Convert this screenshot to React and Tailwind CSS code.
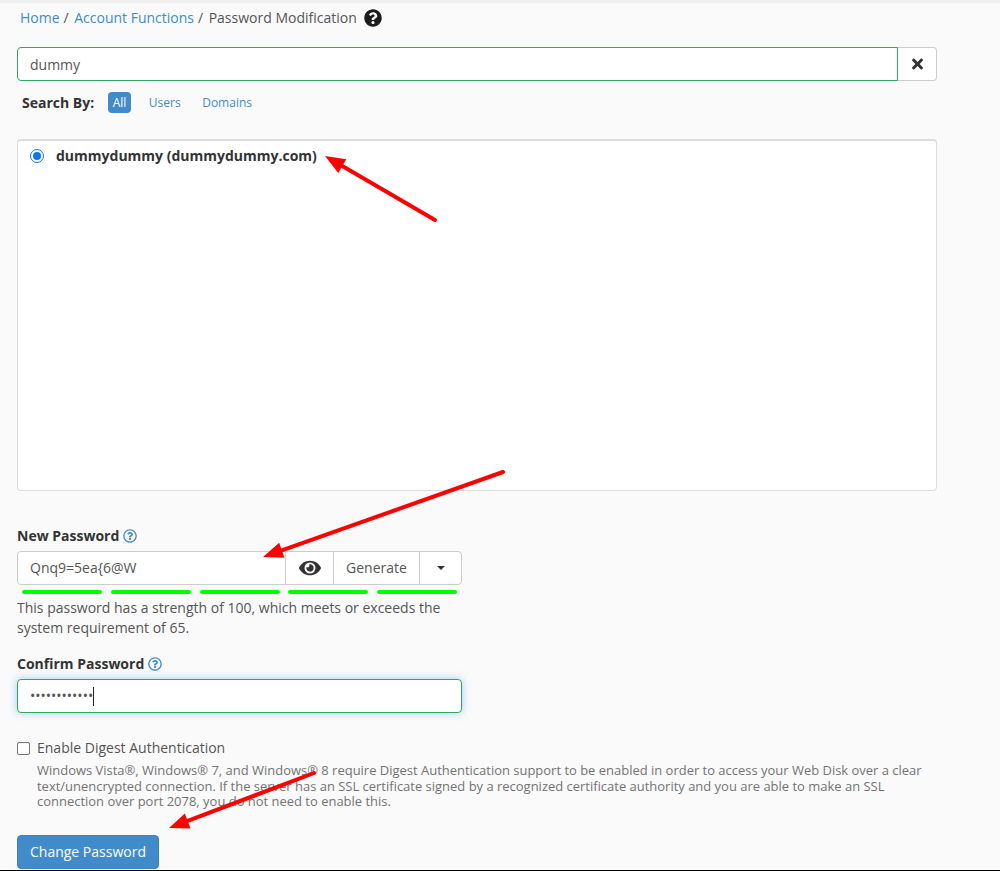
import React from "react";
import { FaTimes, FaEye, FaQuestionCircle, FaRegQuestionCircle } from "react-icons/fa";

function Arrow({ x1, y1, x2, y2 }) {
  const a = Math.atan2(y2 - y1, x2 - x1);
  const L = 20, W = 8;
  const bx = x2 - L * Math.cos(a), by = y2 - L * Math.sin(a);
  const nx = -Math.sin(a), ny = Math.cos(a);
  const pts = `${x2},${y2} ${bx + nx * W},${by + ny * W} ${bx - nx * W},${by - ny * W}`;
  return (
    <g>
      <line x1={x1} y1={y1} x2={bx} y2={by} stroke="#ff0000" strokeWidth="4" strokeLinecap="round" />
      <polygon points={pts} fill="#ff0000" />
    </g>
  );
}

const bars = ["w-20", "w-20", "w-20", "w-20", "w-20"];

export default function App() {
  return (
    <div className="relative h-[871px] overflow-hidden bg-[#fafafa] font-['Open_Sans',sans-serif] text-sm text-[#333]">
      <div className="h-[3px] bg-[#f0f0f0]" />
      <div className="flex h-[30px] items-center pl-5 text-[14px] leading-5">
        <a className="text-[#428bca]">Home</a>
        <span className="ml-1 mr-[5.5px] text-[#555]">/</span>
        <a className="text-[#428bca]">Account Functions</a>
        <span className="ml-1 mr-[5.5px] text-[#555]">/</span>
        <span className="text-[#555]">Password Modification</span>
        <FaQuestionCircle className="ml-[7px] h-[18px] w-[18px] text-[#1c1c1c]" />
      </div>

      <div className="ml-[17px] mt-[14px] flex h-[34px] w-[920px]">
        <div className="flex h-full flex-1 items-center rounded-l border border-[#2fa85f] bg-white pl-3 pt-[1px] text-[#555]">dummy</div>
        <div className="flex h-full w-[39px] items-center justify-center rounded-r border border-l-0 border-[#ccc] bg-white">
          <FaTimes className="h-[16px] w-[15px] text-[#333]" />
        </div>
      </div>

      <div className="ml-[22px] mt-[11px] flex h-[21px] items-center text-[12px]">
        <span className="text-[14px] font-bold">Search By:</span>
        <span className="ml-[14px] rounded bg-[#428bca] px-[4.5px] py-[2px] leading-[17px] text-white">All</span>
        <a className="ml-[18px] text-[#428bca]">Users</a>
        <a className="ml-[21.5px] text-[#428bca]">Domains</a>
      </div>

      <div className="ml-[17px] mt-[26px] h-[352px] w-[920px] rounded border border-t-2 border-[#ddd] bg-white pl-3 pt-[5px]">
        <div className="flex items-center">
          <span className="flex h-[14px] w-[14px] items-center justify-center rounded-full border border-[#0a76f6] bg-white">
            <span className="h-[8px] w-[8px] rounded-full bg-[#0a76f6]" />
          </span>
          <span className="ml-[12px] font-bold leading-5">dummydummy (dummydummy.com)</span>
        </div>
      </div>

      <div className="ml-[17px] mt-[35px] flex h-5 items-center font-bold">
        New Password
        <FaRegQuestionCircle className="ml-1 h-[14px] w-[14px] text-[#428bca]" />
      </div>

      <div className="ml-[17px] mt-[5px] flex h-[34px] w-[445px] rounded border border-[#ccc] bg-white">
        <div className="flex w-[267px] items-center pl-3 text-[#555]">Qnq9=5ea{"{"}6@W</div>
        <div className="flex w-[48px] items-center justify-center border-l border-[#ccc] text-[#333]">
          <FaEye className="h-[22px] w-[22px]" />
        </div>
        <div className="flex w-[86px] items-center justify-center border-l border-[#ccc] text-[#555]">Generate</div>
        <div className="flex flex-1 items-center justify-center border-l border-[#ccc]">
          <span className="h-0 w-0 border-x-4 border-t-4 border-x-transparent border-t-[#333]" />
        </div>
      </div>

      <div className="ml-[22px] mt-[5px] flex w-[435px] justify-between">
        {bars.map((b, i) => (
          <span key={i} className={`h-1 rounded-sm bg-[#00ff00] ${b}`} />
        ))}
      </div>

      <p className="ml-[17px] mt-[4px] w-[445px] leading-5 text-[#555]">
        This password has a strength of 100, which meets or exceeds the system requirement of 65.
      </p>

      <div className="ml-[17px] mt-[16px] flex h-5 items-center font-bold">
        Confirm Password
        <FaRegQuestionCircle className="ml-1 h-[14px] w-[14px] text-[#428bca]" />
      </div>

      <div className="ml-[17px] mt-[5px] flex h-[34px] w-[445px] items-center rounded border border-[#2fa85f] bg-white pl-3 text-[#555] shadow-[0_0_8px_rgba(102,175,233,0.6)]">
        <span className="text-[14px]">••••••••••••</span>
        <span className="h-[19px] w-px bg-[#222]" />
      </div>

      <div className="ml-[17px] mt-[25px] flex h-5 items-center text-[#555]">
        <span className="h-[13px] w-[13px] rounded-[2px] border border-[#767676] bg-white" />
        <span className="ml-[7px]">Enable Digest Authentication</span>
      </div>

      <p className="ml-[37px] mt-[5px] w-[890px] text-[12.97px] leading-[15.5px] text-[#737373]">
        Windows Vista®, Windows® 7, and Windows® 8 require Digest Authentication support to be enabled in order to access your Web Disk over a clear text/unencrypted connection. If the server has an SSL certificate signed by a recognized certificate authority and you are able to make an SSL connection over port 2078, you do not need to enable this.
      </p>

      <button className="ml-[17px] mt-[25px] flex h-[34px] w-[142px] items-center justify-center rounded border border-[#3b82be] bg-[#428bca] text-white">
        Change Password
      </button>

      <div className="absolute inset-x-0 bottom-0 h-px bg-black" />

      <svg className="pointer-events-none absolute left-0 top-0" width="1000" height="871">
        <Arrow x1={435} y1={220} x2={325} y2={156} />
        <Arrow x1={503} y1={472} x2={263} y2={557} />
        <Arrow x1={314} y1={773} x2={169} y2={828} />
      </svg>
    </div>
  );
}
